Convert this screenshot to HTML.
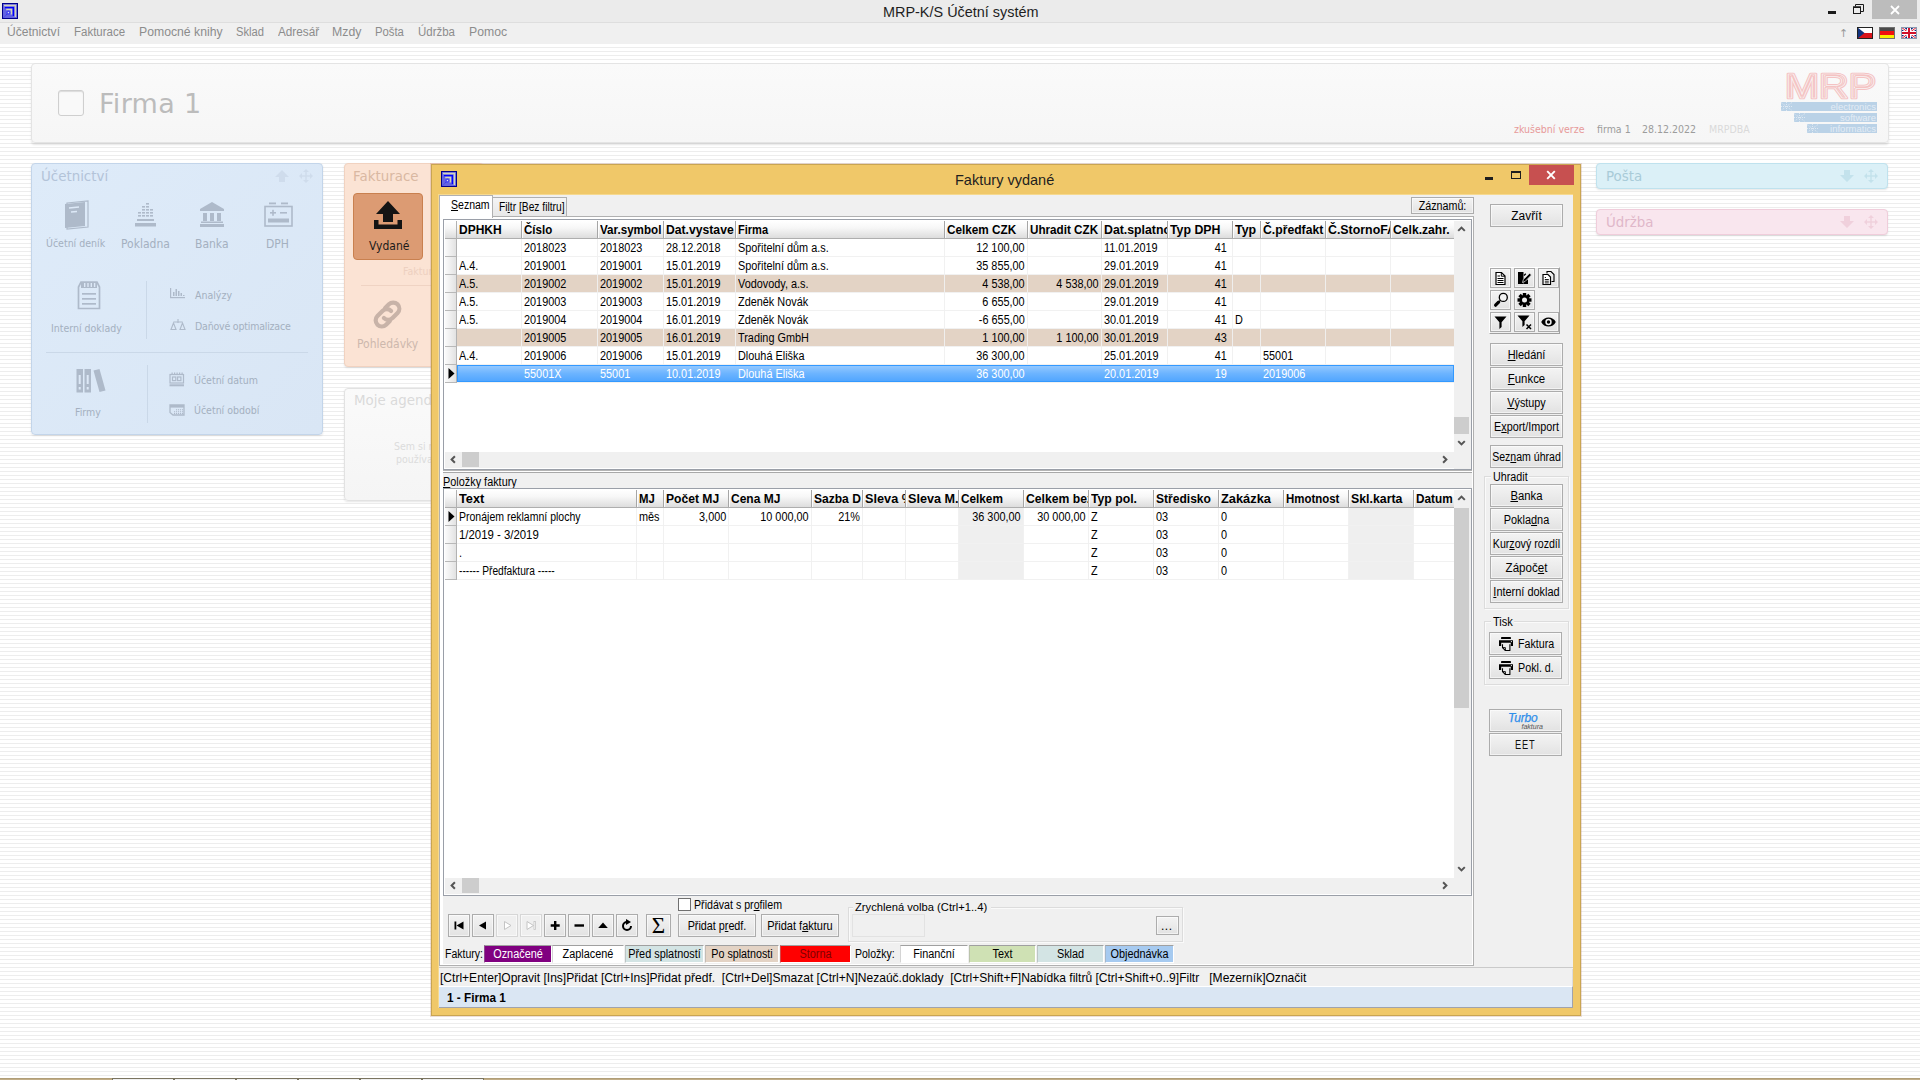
<!DOCTYPE html>
<html lang="cs"><head><meta charset="utf-8"><title>MRP-K/S Účetní systém</title>
<style>
html,body{margin:0;padding:0}
body{width:1920px;height:1080px;overflow:hidden;position:relative;font-family:"Liberation Sans",sans-serif;font-size:11px;color:#000;
background:repeating-linear-gradient(to bottom,#fff 0,#fff 3px,#ededed 3px,#ededed 4px)}
.a{position:absolute}
.t{position:absolute;white-space:pre;line-height:1}
.dj{font-family:"DejaVu Sans",sans-serif}
.djc{font-family:"DejaVu Sans Condensed","DejaVu Sans",sans-serif}
u{text-decoration:underline;text-underline-offset:1px}
/* main chrome */
#tb{left:0;top:0;width:1920px;height:22px;background:#ebebeb}
#mb{left:0;top:22px;width:1920px;height:22px;background:#f0f0f0;border-top:1px solid #dedede;box-sizing:border-box}
.mi{top:26px;font-size:12px;color:#8a8a8a;letter-spacing:-0.05px}
.panel{position:absolute;box-sizing:border-box;border-radius:4px}
/* window */
#win{left:431px;top:163px;width:1150px;height:853px;background:#f0c869;box-sizing:border-box;border:1px solid #dcae4f}
#cli{left:439px;top:195px;width:1135px;height:813px;background:#f0f0f0}
.btn{position:absolute;box-sizing:border-box;border:1px solid #adadad;background:linear-gradient(#f4f4f4,#e6e6e6);text-align:center;white-space:pre;font-size:11px;letter-spacing:-0.2px}
.btn span{position:absolute;left:0;right:0;text-align:center}
.grid{position:absolute;background:#fff;overflow:hidden}
.gh{position:absolute;top:0;height:17px;background:linear-gradient(#ffffff 0%,#f4f4f4 40%,#dcdcdc 100%);border-right:1px solid #b4b4b4;border-bottom:1px solid #b4b4b4;box-sizing:content-box;overflow:hidden;white-space:pre;font-weight:bold;font-size:12px;letter-spacing:-0.1px}
.gh span{position:absolute;left:2px;top:3px;line-height:1}
.gc{position:absolute;height:17px;overflow:hidden;white-space:pre;font-size:11px;letter-spacing:-0.2px;border-right:1px solid #ececec;border-bottom:1px solid #ececec}
.gc span{position:absolute;top:3px;line-height:1}
.gc .l{left:2px}.gc .r{right:3px}
.ind{position:absolute;left:0;width:12px;height:17px;background:linear-gradient(to right,#fdfdfd,#e2e2e2);border-right:1px solid #c0c0c0;border-bottom:1px solid #c0c0c0}
.lg{position:absolute;top:945px;height:17px;box-sizing:border-box;border-top:1px solid #a0a0a0;border-left:1px solid #a0a0a0;border-right:1px solid #fff;border-bottom:1px solid #fff;text-align:center;font-size:11px;letter-spacing:-0.2px;line-height:15px;white-space:pre}

.ms{font-size:12.5px;transform:scaleX(.87);transform-origin:0 0}
.msr{font-size:12.5px;transform:scaleX(.87);transform-origin:100% 0}
.msb{font-size:12.5px;font-weight:bold;transform:scaleX(.96);transform-origin:0 0}
.msc{font-size:12.5px;transform:scaleX(.87);transform-origin:50% 0;text-align:center}
.b{position:absolute;box-sizing:border-box;border:1px solid #acacac;background:linear-gradient(#f3f3f3 0%,#ebebeb 50%,#e2e2e2 100%);box-shadow:inset 0 0 0 1px rgba(255,255,255,.55)}
</style></head>
<body>
<div class="a" id="tb"></div><div class="a" id="mb"></div>
<svg class="a" style="left:2px;top:3px" width="16" height="16" viewBox="0 0 16 16"><rect width="16" height="16" fill="#00008b"/><rect x="1" y="1" width="14" height="14" fill="#6363e2"/><path d="M2 2.6H13.4V14" fill="none" stroke="#d3d3ba" stroke-width="1.5"/><path d="M3 4.6H11.4V13" fill="none" stroke="#0000ff" stroke-width="1.3"/><path d="M4.2 6.6H9.4V11.5" fill="none" stroke="#d3d3ba" stroke-width="1.5"/><circle cx="6.4" cy="9.6" r="1.7" fill="#5a5aee" stroke="#3a3af6" stroke-width=".8"/><rect x="5.9" y="9.1" width="1" height="1" fill="#fff"/><path d="M5 11.2L1.8 14.4" stroke="#2222f0" stroke-width="1" stroke-dasharray="1 1"/></svg>
<div class="t " style="left:883px;top:4px;font-size:15px;color:#1e1e1e;transform:scaleX(.962);transform-origin:0 0">MRP-K/S Účetní systém</div>
<div class="a " style="left:1828px;top:11px;width:8px;height:3px;background:#1a1a1a"></div>
<svg class="a" style="left:1853px;top:4px" width="11" height="10" viewBox="0 0 11 10"><path d="M2.5 2.5V0.5H10.5V7.5H8" fill="none" stroke="#1a1a1a" stroke-width="1"/><rect x="0.5" y="3" width="7" height="6.5" fill="none" stroke="#1a1a1a" stroke-width="1"/><rect x="0" y="2.5" width="8" height="1.5" fill="#1a1a1a"/></svg>
<div class="a " style="left:1872px;top:0px;width:45px;height:19px;background:#bcbcbc"></div>
<svg class="a" style="left:1890px;top:5px" width="10" height="10" viewBox="0 0 10 10"><path d="M1 1L9 9M9 1L1 9" stroke="#fff" stroke-width="1.8" fill="none"/></svg>
<div class="t" style="left:7px;top:26.43px;font-size:12.5px;color:#8c8c8c;transform:scaleX(0.966);transform-origin:0 0;">Účetnictví</div>
<div class="t" style="left:74px;top:26.43px;font-size:12.5px;color:#8c8c8c;transform:scaleX(0.919);transform-origin:0 0;">Fakturace</div>
<div class="t" style="left:139px;top:26.43px;font-size:12.5px;color:#8c8c8c;transform:scaleX(0.978);transform-origin:0 0;">Pomocné knihy</div>
<div class="t" style="left:236px;top:26.43px;font-size:12.5px;color:#8c8c8c;transform:scaleX(0.895);transform-origin:0 0;">Sklad</div>
<div class="t" style="left:278px;top:26.43px;font-size:12.5px;color:#8c8c8c;transform:scaleX(0.939);transform-origin:0 0;">Adresář</div>
<div class="t" style="left:332px;top:26.43px;font-size:12.5px;color:#8c8c8c;transform:scaleX(0.984);transform-origin:0 0;">Mzdy</div>
<div class="t" style="left:375px;top:26.43px;font-size:12.5px;color:#8c8c8c;transform:scaleX(0.904);transform-origin:0 0;">Pošta</div>
<div class="t" style="left:418px;top:26.43px;font-size:12.5px;color:#8c8c8c;transform:scaleX(0.918);transform-origin:0 0;">Údržba</div>
<div class="t" style="left:469px;top:26.43px;font-size:12.5px;color:#8c8c8c;transform:scaleX(0.979);transform-origin:0 0;">Pomoc</div>
<div class="t dj" style="left:1839px;top:28px;font-size:11px;color:#9a9a9a">↑</div>
<svg class="a" style="left:1857px;top:27px" width="16" height="12" viewBox="0 0 16 12"><rect width="16" height="12" fill="#fff"/><rect y="6" width="16" height="6" fill="#d8141c"/><path d="M0 0L7.5 6L0 12Z" fill="#11337e"/><rect x=".5" y=".5" width="15" height="11" fill="none" stroke="#222" stroke-width="1"/></svg>
<svg class="a" style="left:1879px;top:27px" width="16" height="12" viewBox="0 0 16 12"><rect width="16" height="4" fill="#4a4a4a"/><rect y="4" width="16" height="4" fill="#f01010"/><rect y="8" width="16" height="4" fill="#f8f000"/><rect x=".5" y=".5" width="15" height="11" fill="none" stroke="#707070" stroke-width="1"/></svg>
<svg class="a" style="left:1901px;top:27px" width="16" height="12" viewBox="0 0 16 12"><rect width="16" height="12" fill="#0a1f7a"/><path d="M0 0L16 12M16 0L0 12" stroke="#fff" stroke-width="2.6"/><path d="M0 0L16 12M16 0L0 12" stroke="#e0162b" stroke-width="1"/><path d="M8 0V12M0 6H16" stroke="#fff" stroke-width="4"/><path d="M8 0V12M0 6H16" stroke="#d0102a" stroke-width="2"/><rect x=".5" y=".5" width="15" height="11" fill="none" stroke="#8a9ab0" stroke-width="1"/></svg>
<div class="a panel" style="left:31px;top:63px;width:1858px;height:80px;background:linear-gradient(#fafafa,#f6f6f6);border:1px solid #e4e4e4;box-shadow:0 2px 2px rgba(0,0,0,.10)"></div>
<div class="a " style="left:58px;top:90px;width:26px;height:26px;box-sizing:border-box;border:1px solid #cfcfcf;border-radius:3px;background:#f9f9f9;box-shadow:inset 0 1px 1px rgba(0,0,0,.12)"></div>
<div class="t dj" style="left:99px;top:90px;font-size:27px;color:#bcbcbc;letter-spacing:0.3px">Firma 1</div>
<div class="t djc" style="left:1514px;top:124px;font-size:10.5px;color:#e79a9a">zkušební verze</div>
<div class="t djc" style="left:1597px;top:124px;font-size:10.5px;color:#9c9c9c">firma 1</div>
<div class="t djc" style="left:1642px;top:124px;font-size:10.5px;color:#9c9c9c">28.12.2022</div>
<div class="t djc" style="left:1709px;top:124px;font-size:10.5px;color:#dadada">MRPDBA</div>
<svg class="a" style="left:1778px;top:68px" width="104" height="70" viewBox="0 0 104 70">
<text x="7" y="30" font-family="Liberation Sans, sans-serif" font-size="35" textLength="91" lengthAdjust="spacingAndGlyphs" fill="none" stroke="#f4c3c3" stroke-width="2.7" stroke-linejoin="round">MRP</text>
<text x="7" y="30" font-family="Liberation Sans, sans-serif" font-size="35" textLength="91" lengthAdjust="spacingAndGlyphs" fill="none" stroke="#f9f3f3" stroke-width="0.7" stroke-linejoin="round">MRP</text>
<rect x="3" y="34" width="96" height="9" fill="#bad2e7"/><rect x="16" y="45" width="83" height="9" fill="#bad2e7"/><rect x="29" y="56" width="70" height="9" fill="#bad2e7"/>
<g fill="#e3ecf5" font-family="Liberation Sans, sans-serif" font-size="9.5" text-anchor="end"><text x="98" y="41.5">electronics</text><text x="98" y="52.5">software</text><text x="98" y="63.5">informatics</text></g>
<g stroke="#dfe9f3" stroke-width="1" stroke-dasharray="1 1" fill="none"><path d="M3 34.5l11 8M14 34.5l-11 8M3 38.5h11M8.5 34v9"/><path d="M16 45.5l11 8M27 45.5l-11 8M16 49.5h11M21.5 45v9"/><path d="M29 56.5l11 8M40 56.5l-11 8M29 60.5h11M34.5 56v9"/></g>
</svg>
<div class="a panel" style="left:31px;top:163px;width:292px;height:272px;background:linear-gradient(135deg,#deebf9,#d9e6f5);border:1px solid #c3d5ea;box-shadow:0 1px 2px rgba(0,0,0,.10)"></div>
<div class="t dj" style="left:41px;top:170px;font-size:13.4px;color:#b3c3d8">Účetnictví</div>
<svg class="a" style="left:275px;top:169px" width="40" height="14" viewBox="0 0 40 14"><path d="M7 1L14 8H10V13H4V8H0Z" fill="#cfdcec"/><g fill="#cfdcec"><path d="M31 0l3 3h-6zM31 14l3-3h-6zM24 7l3-3v6zM38 7l-3-3v6z"/><rect x="30.3" y="2" width="1.4" height="10"/><rect x="26" y="6.3" width="10" height="1.4"/></g></svg>
<svg class="a" style="left:64px;top:200px" width="28" height="30" viewBox="0 0 28 30"><path d="M3 3L24 1V27L3 29Z" fill="none" stroke="#aebaca" stroke-width="1.2"/><path d="M1 4L21 2V26L1 28Z" fill="#aebaca"/><path d="M5 8L15 7M7 12L13 11.5" stroke="#dde9f7" stroke-width="1.3"/></svg>
<div class="t djc" style="left:46px;top:238px;font-size:10.5px;color:#a4b0c0">Účetní deník</div>
<svg class="a" style="left:135px;top:202px" width="22" height="26" viewBox="0 0 22 26"><g fill="#aebaca"><rect x="0" y="21" width="21" height="3.5"/><rect x="2" y="17" width="17" height="2"/><rect x="3" y="13" width="3" height="1.6"/><rect x="3" y="10" width="3" height="1.6"/><rect x="7" y="13" width="3" height="1.6"/><rect x="7" y="10" width="3" height="1.6"/><rect x="7" y="7" width="3" height="1.6"/><rect x="7" y="4" width="3" height="1.6"/><rect x="11" y="13" width="3" height="1.6"/><rect x="11" y="10" width="3" height="1.6"/><rect x="11" y="7" width="3" height="1.6"/><rect x="11" y="4" width="3" height="1.6"/><rect x="11" y="1" width="3" height="1.6"/><rect x="15" y="13" width="3" height="1.6"/><rect x="15" y="10" width="3" height="1.6"/><rect x="15" y="7" width="3" height="1.6"/></g></svg>
<div class="t djc" style="left:121px;top:238px;font-size:12px;color:#a4b0c0">Pokladna</div>
<svg class="a" style="left:199px;top:202px" width="26" height="26" viewBox="0 0 26 26"><g fill="#aebaca"><path d="M13 0L25 7V9H1V7Z"/><rect x="4" y="11" width="4" height="8"/><rect x="11" y="11" width="4" height="8"/><rect x="18" y="11" width="4" height="8"/><rect x="2" y="19.5" width="22" height="1.5"/><rect x="1" y="22" width="24" height="3"/></g></svg>
<div class="t djc" style="left:195px;top:238px;font-size:12px;color:#a4b0c0">Banka</div>
<svg class="a" style="left:264px;top:202px" width="30" height="26" viewBox="0 0 30 26"><g fill="none" stroke="#aebaca" stroke-width="1.6"><rect x="1" y="4.5" width="27" height="19.5"/></g><g fill="#aebaca"><rect x="5" y="0.5" width="7" height="1.8"/><rect x="17" y="0.5" width="7" height="1.8"/><rect x="6" y="10" width="6" height="1.6"/><rect x="8.2" y="7.8" width="1.6" height="6"/><rect x="16" y="10" width="7" height="1.6"/><rect x="4" y="16.5" width="21" height="4"/></g></svg>
<div class="t djc" style="left:266px;top:238px;font-size:12px;color:#a4b0c0">DPH</div>
<svg class="a" style="left:77px;top:280px" width="24" height="30" viewBox="0 0 24 30"><path d="M4 2H20L22.5 7V28.5H1.5V7Z" fill="none" stroke="#aebaca" stroke-width="1.7"/><g fill="#aebaca"><rect x="4" y="2" width="16" height="6"/><rect x="5" y="13" width="14" height="1.7"/><rect x="5" y="18" width="14" height="1.7"/><rect x="5" y="23" width="14" height="1.7"/></g><g fill="#dde9f7"><rect x="7" y="3" width="1.4" height="4"/><rect x="10.3" y="3" width="1.4" height="4"/><rect x="13.6" y="3" width="1.4" height="4"/><rect x="16.9" y="3" width="1.4" height="4"/></g></svg>
<div class="t djc" style="left:51px;top:323px;font-size:10.5px;color:#a4b0c0">Interní doklady</div>
<div class="a " style="left:146px;top:281px;width:1px;height:58px;background:#cad8e8"></div>
<svg class="a" style="left:170px;top:288px" width="16" height="12" viewBox="0 0 16 12"><g fill="#aebaca"><rect x="0" y="0" width="1.2" height="10"/><rect x="0" y="9" width="15" height="1.2"/><rect x="3" y="4" width="1.5" height="4"/><rect x="5.5" y="1" width="1.5" height="7"/><rect x="8" y="3" width="1.5" height="5"/><rect x="10.5" y="5" width="1.5" height="3"/><rect x="13" y="7" width="1.5" height="1"/></g></svg>
<div class="t djc" style="left:195px;top:290px;font-size:10.5px;color:#a4b0c0">Analýzy</div>
<svg class="a" style="left:170px;top:318px" width="16" height="13" viewBox="0 0 16 13"><g fill="none" stroke="#aebaca" stroke-width="1.1"><path d="M3.5 5L1 11.5H6ZM12.5 5L10 11.5H15Z"/><path d="M3.5 4H12.5M8 1V5"/></g></svg>
<div class="t djc" style="left:195px;top:321px;font-size:10.5px;color:#a4b0c0;letter-spacing:-0.2px">Daňové optimalizace</div>
<div class="a " style="left:46px;top:352px;width:262px;height:1px;background:#cad8e8"></div>
<svg class="a" style="left:76px;top:368px" width="30" height="26" viewBox="0 0 30 26"><g fill="#aebaca"><rect x="0.5" y="1" width="6.5" height="23.5"/><rect x="8.5" y="1" width="6.5" height="23.5"/><path d="M17.5 2.5L23.5 1L29.5 22.5L23.5 24Z"/></g><g fill="#dde9f7"><rect x="2.7" y="7" width="2" height="9"/><rect x="10.7" y="7" width="2" height="9"/><rect x="2.7" y="19" width="2" height="2.5"/><rect x="10.7" y="19" width="2" height="2.5"/></g></svg>
<div class="t djc" style="left:75px;top:407px;font-size:10.5px;color:#a4b0c0">Firmy</div>
<div class="a " style="left:147px;top:365px;width:1px;height:58px;background:#cad8e8"></div>
<svg class="a" style="left:169px;top:372px" width="16" height="15" viewBox="0 0 16 15"><g fill="none" stroke="#aebaca" stroke-width="1.2"><rect x="1" y="2.5" width="13.5" height="8.5"/><rect x="3.5" y="5" width="3.3" height="3.6"/><rect x="8.6" y="5" width="3.3" height="3.6"/></g><g fill="#aebaca"><rect x="0.5" y="12.3" width="14.5" height="2"/><rect x="2.5" y="0.5" width="1.2" height="2"/><rect x="5" y="0.5" width="1.2" height="2"/><rect x="7.5" y="0.5" width="1.2" height="2"/><rect x="10" y="0.5" width="1.2" height="2"/><rect x="12.5" y="0.5" width="1.2" height="2"/></g></svg>
<div class="t djc" style="left:194px;top:375px;font-size:10.5px;color:#a4b0c0">Účetní datum</div>
<svg class="a" style="left:169px;top:404px" width="16" height="13" viewBox="0 0 16 13"><path d="M1 1H15V11H4L1 8.5Z" fill="none" stroke="#aebaca" stroke-width="1.3"/><rect x="1" y="1" width="14" height="2.6" fill="#aebaca"/><g fill="#aebaca"><rect x="7" y="5.2" width="1.1" height="1.1"/><rect x="9" y="5.2" width="1.1" height="1.1"/><rect x="11" y="5.2" width="1.1" height="1.1"/><rect x="13" y="5.2" width="1.1" height="1.1"/><rect x="5" y="7.2" width="1.1" height="1.1"/><rect x="7" y="7.2" width="1.1" height="1.1"/><rect x="9" y="7.2" width="1.1" height="1.1"/><rect x="11" y="7.2" width="1.1" height="1.1"/><rect x="13" y="7.2" width="1.1" height="1.1"/><rect x="5" y="9" width="1.1" height="1.1"/><rect x="7" y="9" width="1.1" height="1.1"/><rect x="9" y="9" width="1.1" height="1.1"/><rect x="11" y="9" width="1.1" height="1.1"/><rect x="13" y="9" width="1.1" height="1.1"/></g></svg>
<div class="t djc" style="left:194px;top:405px;font-size:10.5px;color:#a4b0c0">Účetní období</div>
<div class="a panel" style="left:344px;top:163px;width:140px;height:204px;background:#fbe3d4;border:1px solid #f1d2c0;box-shadow:0 1px 2px rgba(0,0,0,.10)"></div>
<div class="t dj" style="left:353px;top:170px;font-size:13.4px;color:#d9b8a2">Fakturace</div>
<div class="a " style="left:353px;top:193px;width:70px;height:67px;box-sizing:border-box;background:#dc9b73;border:1px solid #c9804f;border-radius:4px"></div>
<svg class="a" style="left:373px;top:200px" width="30" height="30" viewBox="0 0 30 30"><g fill="#141414"><path d="M15 1L27 14H20V22H10V14H3Z"/><path d="M1 20H5.5V24.5H24.5V20H29V29H1Z"/></g></svg>
<div class="t djc" style="left:369px;top:240px;font-size:12px;color:#1a1a1a">Vydané</div>
<div class="t djc" style="left:403px;top:266px;font-size:10.5px;color:#edd0c0">Faktury</div>
<div class="a " style="left:361px;top:285px;width:100px;height:1px;background:#efd3c3"></div>
<svg class="a" style="left:370px;top:297px" width="35" height="35" viewBox="0 0 30 30"><g fill="none" stroke="#c8b3a8" stroke-width="3.6" stroke-linecap="round"><path d="M13 9.5l3.2-3.2a5.2 5.2 0 0 1 7.4 7.4l-4.3 4.3a5.2 5.2 0 0 1-7.4 0"/><path d="M17 20.5l-3.2 3.2a5.2 5.2 0 0 1-7.4-7.4l4.3-4.3a5.2 5.2 0 0 1 7.4 0"/></g></svg>
<div class="t djc" style="left:357px;top:338px;font-size:12px;color:#cdb8ad">Pohledávky</div>
<div class="a panel" style="left:344px;top:388px;width:140px;height:113px;background:linear-gradient(#fafafa,#f5f5f5);border:1px solid #e2e2e2;box-shadow:0 1px 2px rgba(0,0,0,.10)"></div>
<div class="t dj" style="left:354px;top:394px;font-size:13.4px;color:#dadada">Moje agendy</div>
<div class="t djc" style="left:394px;top:441px;font-size:10.5px;color:#dcdcdc">Sem si m</div>
<div class="t djc" style="left:396px;top:454px;font-size:10.5px;color:#dcdcdc">používa</div>
<div class="a panel" style="left:1596px;top:163px;width:292px;height:26px;background:#dbf0f7;border:1px solid #bfe2ee;box-shadow:0 1px 2px rgba(0,0,0,.10)"></div>
<div class="t dj" style="left:1606px;top:170.4px;font-size:13.4px;color:#a9cbd8">Pošta</div>
<svg class="a" style="left:1840px;top:169px" width="40" height="14" viewBox="0 0 40 14"><path d="M7 13L14 6H10V1H4V6H0Z" fill="#c3e2ec"/><g fill="#c3e2ec"><path d="M31 0l3 3h-6zM31 14l3-3h-6zM24 7l3-3v6zM38 7l-3-3v6z"/><rect x="30.3" y="2" width="1.4" height="10"/><rect x="26" y="6.3" width="10" height="1.4"/></g></svg>
<div class="a panel" style="left:1596px;top:209px;width:292px;height:26px;background:#f9e6ee;border:1px solid #f0cddb;box-shadow:0 1px 2px rgba(0,0,0,.10)"></div>
<div class="t dj" style="left:1606px;top:216.4px;font-size:13.4px;color:#e0b7c9">Údržba</div>
<svg class="a" style="left:1840px;top:215px" width="40" height="14" viewBox="0 0 40 14"><path d="M7 13L14 6H10V1H4V6H0Z" fill="#f0d0dc"/><g fill="#f0d0dc"><path d="M31 0l3 3h-6zM31 14l3-3h-6zM24 7l3-3v6zM38 7l-3-3v6z"/><rect x="30.3" y="2" width="1.4" height="10"/><rect x="26" y="6.3" width="10" height="1.4"/></g></svg>
<div class="a " style="left:431px;top:164px;width:1150px;height:852px;background:#f0c869;box-sizing:border-box;border:1px solid #c9a552;box-shadow:0 0 0 1px rgba(190,140,120,.28)"></div>
<div class="a " style="left:438px;top:194px;width:1135px;height:814px;background:#f6d98f"></div>
<div class="a " style="left:439px;top:195px;width:1134px;height:813px;background:#f0f0f0"></div>
<svg class="a" style="left:441px;top:171px" width="16" height="16" viewBox="0 0 16 16"><rect width="16" height="16" fill="#00008b"/><rect x="1" y="1" width="14" height="14" fill="#6363e2"/><path d="M2 2.6H13.4V14" fill="none" stroke="#d3d3ba" stroke-width="1.5"/><path d="M3 4.6H11.4V13" fill="none" stroke="#0000ff" stroke-width="1.3"/><path d="M4.2 6.6H9.4V11.5" fill="none" stroke="#d3d3ba" stroke-width="1.5"/><circle cx="6.4" cy="9.6" r="1.7" fill="#5a5aee" stroke="#3a3af6" stroke-width=".8"/><rect x="5.9" y="9.1" width="1" height="1" fill="#fff"/><path d="M5 11.2L1.8 14.4" stroke="#2222f0" stroke-width="1" stroke-dasharray="1 1"/></svg>
<div class="t " style="left:955px;top:172px;font-size:15px;color:#1e1e1e;transform:scaleX(.968);transform-origin:0 0">Faktury vydané</div>
<div class="a " style="left:1485px;top:177px;width:8px;height:3px;background:#1e1e1e"></div>
<div class="a " style="left:1511px;top:171px;width:10px;height:8px;box-sizing:border-box;border:1px solid #1e1e1e;border-top-width:2px"></div>
<div class="a " style="left:1529px;top:165px;width:45px;height:20px;background:#c75050"></div>
<svg class="a" style="left:1546px;top:170px" width="10" height="10" viewBox="0 0 10 10"><path d="M1.2 1.2L8.8 8.8M8.8 1.2L1.2 8.8" stroke="#fff" stroke-width="1.9" fill="none"/></svg>
<div class="a " style="left:439px;top:216px;width:1035px;height:750px;box-sizing:border-box;border:1px solid #b0b0b0;background:#fff"></div>
<div class="a " style="left:439px;top:195px;width:54px;height:23px;box-sizing:border-box;border:1px solid #b0b0b0;border-bottom:none;background:#fff"></div>
<div class="t ms" style="left:451px;top:199.43px;color:#000;transform:scaleX(0.842);"><u>S</u>eznam</div>
<div class="a " style="left:492px;top:197px;width:75px;height:19px;box-sizing:border-box;border:1px solid #b0b0b0;border-bottom:none;background:linear-gradient(#f4f4f4,#e8e8e8)"></div>
<div class="t ms" style="left:499px;top:201.43px;color:#000;transform:scaleX(0.821);">Fi<u>l</u>tr [Bez filtru]</div>
<div class="b" style="left:1411px;top:197px;width:63px;height:17px"></div>
<div class="t msc" style="left:1371px;width:143px;top:200.43px;color:#000;transform:scaleX(0.858)">Záznamů:</div>
<div class="a " style="left:443px;top:219px;width:1029px;height:251px;box-sizing:border-box;border:1px solid #9a9fa8;background:#fff"></div>
<div class="a " style="left:445px;top:221px;width:1009px;height:18px;background:linear-gradient(#ffffff 0%,#f7f7f7 40%,#dddddd 100%);border-bottom:1px solid #aeaeae;box-sizing:border-box"></div>
<div class="a " style="left:445px;top:239px;width:11px;height:144px;background:linear-gradient(to right,#fbfbfb,#e2e2e2)"></div>
<div class="a " style="left:456px;top:221px;width:1px;height:162px;background:#b2b2b2"></div>
<div class="a " style="left:457px;top:275px;width:997px;height:17px;background:#e3d3c5"></div>
<div class="a " style="left:457px;top:329px;width:997px;height:17px;background:#e3d3c5"></div>
<div class="a " style="left:445px;top:256px;width:11px;height:1px;background:#b8b8b8"></div>
<div class="a " style="left:457px;top:256px;width:997px;height:1px;background:rgba(240,240,240,.92)"></div>
<div class="a " style="left:445px;top:274px;width:11px;height:1px;background:#b8b8b8"></div>
<div class="a " style="left:457px;top:274px;width:997px;height:1px;background:rgba(240,240,240,.92)"></div>
<div class="a " style="left:445px;top:292px;width:11px;height:1px;background:#b8b8b8"></div>
<div class="a " style="left:457px;top:292px;width:997px;height:1px;background:rgba(240,240,240,.92)"></div>
<div class="a " style="left:445px;top:310px;width:11px;height:1px;background:#b8b8b8"></div>
<div class="a " style="left:457px;top:310px;width:997px;height:1px;background:rgba(240,240,240,.92)"></div>
<div class="a " style="left:445px;top:328px;width:11px;height:1px;background:#b8b8b8"></div>
<div class="a " style="left:457px;top:328px;width:997px;height:1px;background:rgba(240,240,240,.92)"></div>
<div class="a " style="left:445px;top:346px;width:11px;height:1px;background:#b8b8b8"></div>
<div class="a " style="left:457px;top:346px;width:997px;height:1px;background:rgba(240,240,240,.92)"></div>
<div class="a " style="left:445px;top:364px;width:11px;height:1px;background:#b8b8b8"></div>
<div class="a " style="left:457px;top:364px;width:997px;height:1px;background:rgba(240,240,240,.92)"></div>
<div class="a " style="left:445px;top:382px;width:11px;height:1px;background:#b8b8b8"></div>
<div class="a " style="left:457px;top:382px;width:997px;height:1px;background:rgba(240,240,240,.92)"></div>
<div class="a " style="left:521px;top:221px;width:1px;height:17px;background:#a6a6a6"></div>
<div class="a " style="left:522px;top:221px;width:1px;height:17px;background:rgba(255,255,255,.85)"></div>
<div class="a " style="left:521px;top:239px;width:1px;height:144px;background:rgba(240,240,240,.92)"></div>
<div class="a " style="left:597px;top:221px;width:1px;height:17px;background:#a6a6a6"></div>
<div class="a " style="left:598px;top:221px;width:1px;height:17px;background:rgba(255,255,255,.85)"></div>
<div class="a " style="left:597px;top:239px;width:1px;height:144px;background:rgba(240,240,240,.92)"></div>
<div class="a " style="left:663px;top:221px;width:1px;height:17px;background:#a6a6a6"></div>
<div class="a " style="left:664px;top:221px;width:1px;height:17px;background:rgba(255,255,255,.85)"></div>
<div class="a " style="left:663px;top:239px;width:1px;height:144px;background:rgba(240,240,240,.92)"></div>
<div class="a " style="left:735px;top:221px;width:1px;height:17px;background:#a6a6a6"></div>
<div class="a " style="left:736px;top:221px;width:1px;height:17px;background:rgba(255,255,255,.85)"></div>
<div class="a " style="left:735px;top:239px;width:1px;height:144px;background:rgba(240,240,240,.92)"></div>
<div class="a " style="left:944px;top:221px;width:1px;height:17px;background:#a6a6a6"></div>
<div class="a " style="left:945px;top:221px;width:1px;height:17px;background:rgba(255,255,255,.85)"></div>
<div class="a " style="left:944px;top:239px;width:1px;height:144px;background:rgba(240,240,240,.92)"></div>
<div class="a " style="left:1027px;top:221px;width:1px;height:17px;background:#a6a6a6"></div>
<div class="a " style="left:1028px;top:221px;width:1px;height:17px;background:rgba(255,255,255,.85)"></div>
<div class="a " style="left:1027px;top:239px;width:1px;height:144px;background:rgba(240,240,240,.92)"></div>
<div class="a " style="left:1101px;top:221px;width:1px;height:17px;background:#a6a6a6"></div>
<div class="a " style="left:1102px;top:221px;width:1px;height:17px;background:rgba(255,255,255,.85)"></div>
<div class="a " style="left:1101px;top:239px;width:1px;height:144px;background:rgba(240,240,240,.92)"></div>
<div class="a " style="left:1167px;top:221px;width:1px;height:17px;background:#a6a6a6"></div>
<div class="a " style="left:1168px;top:221px;width:1px;height:17px;background:rgba(255,255,255,.85)"></div>
<div class="a " style="left:1167px;top:239px;width:1px;height:144px;background:rgba(240,240,240,.92)"></div>
<div class="a " style="left:1232px;top:221px;width:1px;height:17px;background:#a6a6a6"></div>
<div class="a " style="left:1233px;top:221px;width:1px;height:17px;background:rgba(255,255,255,.85)"></div>
<div class="a " style="left:1232px;top:239px;width:1px;height:144px;background:rgba(240,240,240,.92)"></div>
<div class="a " style="left:1260px;top:221px;width:1px;height:17px;background:#a6a6a6"></div>
<div class="a " style="left:1261px;top:221px;width:1px;height:17px;background:rgba(255,255,255,.85)"></div>
<div class="a " style="left:1260px;top:239px;width:1px;height:144px;background:rgba(240,240,240,.92)"></div>
<div class="a " style="left:1325px;top:221px;width:1px;height:17px;background:#a6a6a6"></div>
<div class="a " style="left:1326px;top:221px;width:1px;height:17px;background:rgba(255,255,255,.85)"></div>
<div class="a " style="left:1325px;top:239px;width:1px;height:144px;background:rgba(240,240,240,.92)"></div>
<div class="a " style="left:1390px;top:221px;width:1px;height:17px;background:#a6a6a6"></div>
<div class="a " style="left:1391px;top:221px;width:1px;height:17px;background:rgba(255,255,255,.85)"></div>
<div class="a " style="left:1390px;top:239px;width:1px;height:144px;background:rgba(240,240,240,.92)"></div>
<div class="a " style="left:457px;top:365px;width:997px;height:17px;box-sizing:border-box;border:1px solid #3399ff;background:linear-gradient(#93c8ff 0%,#6cb4ff 50%,#52a6ff 100%)"></div>
<div class="a" style="left:459px;top:221px;width:62px;height:16px;overflow:hidden"><div class="t msb" style="left:0;top:3.43px;color:#000;transform:scaleX(0.961);">DPHKH</div></div>
<div class="a" style="left:524px;top:221px;width:73px;height:16px;overflow:hidden"><div class="t msb" style="left:0;top:3.43px;color:#000;transform:scaleX(0.923);">Číslo</div></div>
<div class="a" style="left:600px;top:221px;width:63px;height:16px;overflow:hidden"><div class="t msb" style="left:0;top:3.43px;color:#000;transform:scaleX(0.93);">Var.symbol</div></div>
<div class="a" style="left:666px;top:221px;width:69px;height:16px;overflow:hidden"><div class="t msb" style="left:0;top:3.43px;color:#000;transform:scaleX(0.974);">Dat.vystave</div></div>
<div class="a" style="left:738px;top:221px;width:206px;height:16px;overflow:hidden"><div class="t msb" style="left:0;top:3.43px;color:#000;transform:scaleX(0.884);">Firma</div></div>
<div class="a" style="left:947px;top:221px;width:80px;height:16px;overflow:hidden"><div class="t msb" style="left:0;top:3.43px;color:#000;transform:scaleX(0.94);">Celkem CZK</div></div>
<div class="a" style="left:1030px;top:221px;width:71px;height:16px;overflow:hidden"><div class="t msb" style="left:0;top:3.43px;color:#000;transform:scaleX(0.934);">Uhradit CZK</div></div>
<div class="a" style="left:1104px;top:221px;width:63px;height:16px;overflow:hidden"><div class="t msb" style="left:0;top:3.43px;color:#000;transform:scaleX(0.984);">Dat.splatno</div></div>
<div class="a" style="left:1170px;top:221px;width:62px;height:16px;overflow:hidden"><div class="t msb" style="left:0;top:3.43px;color:#000;transform:scaleX(0.987);">Typ DPH</div></div>
<div class="a" style="left:1235px;top:221px;width:25px;height:16px;overflow:hidden"><div class="t msb" style="left:0;top:3.43px;color:#000;transform:scaleX(0.991);">Typ</div></div>
<div class="a" style="left:1263px;top:221px;width:62px;height:16px;overflow:hidden"><div class="t msb" style="left:0;top:3.43px;color:#000;transform:scaleX(0.975);">Č.předfakt</div></div>
<div class="a" style="left:1328px;top:221px;width:62px;height:16px;overflow:hidden"><div class="t msb" style="left:0;top:3.43px;color:#000;transform:scaleX(0.989);">Č.StornoFA</div></div>
<div class="a" style="left:1393px;top:221px;width:61px;height:16px;overflow:hidden"><div class="t msb" style="left:0;top:3.43px;color:#000;transform:scaleX(0.972);">Celk.zahr.</div></div>
<div class="t ms" style="left:524px;top:242.43px;color:#000;">2018023</div>
<div class="t ms" style="left:600px;top:242.43px;color:#000;">2018023</div>
<div class="t ms" style="left:666px;top:242.43px;color:#000;">28.12.2018</div>
<div class="t ms" style="left:738px;top:242.43px;color:#000;">Spořitelní dům a.s.</div>
<div class="t msr" style="right:895px;top:242.43px;color:#000">12 100,00</div>
<div class="t ms" style="left:1104px;top:242.43px;color:#000;">11.01.2019</div>
<div class="t msr" style="right:693px;top:242.43px;color:#000">41</div>
<div class="t ms" style="left:459px;top:260.43px;color:#000;">A.4.</div>
<div class="t ms" style="left:524px;top:260.43px;color:#000;">2019001</div>
<div class="t ms" style="left:600px;top:260.43px;color:#000;">2019001</div>
<div class="t ms" style="left:666px;top:260.43px;color:#000;">15.01.2019</div>
<div class="t ms" style="left:738px;top:260.43px;color:#000;">Spořitelní dům a.s.</div>
<div class="t msr" style="right:895px;top:260.43px;color:#000">35 855,00</div>
<div class="t ms" style="left:1104px;top:260.43px;color:#000;">29.01.2019</div>
<div class="t msr" style="right:693px;top:260.43px;color:#000">41</div>
<div class="t ms" style="left:459px;top:278.43px;color:#000;">A.5.</div>
<div class="t ms" style="left:524px;top:278.43px;color:#000;">2019002</div>
<div class="t ms" style="left:600px;top:278.43px;color:#000;">2019002</div>
<div class="t ms" style="left:666px;top:278.43px;color:#000;">15.01.2019</div>
<div class="t ms" style="left:738px;top:278.43px;color:#000;">Vodovody, a.s.</div>
<div class="t msr" style="right:895px;top:278.43px;color:#000">4 538,00</div>
<div class="t msr" style="right:821px;top:278.43px;color:#000">4 538,00</div>
<div class="t ms" style="left:1104px;top:278.43px;color:#000;">29.01.2019</div>
<div class="t msr" style="right:693px;top:278.43px;color:#000">41</div>
<div class="t ms" style="left:459px;top:296.43px;color:#000;">A.5.</div>
<div class="t ms" style="left:524px;top:296.43px;color:#000;">2019003</div>
<div class="t ms" style="left:600px;top:296.43px;color:#000;">2019003</div>
<div class="t ms" style="left:666px;top:296.43px;color:#000;">15.01.2019</div>
<div class="t ms" style="left:738px;top:296.43px;color:#000;">Zdeněk Novák</div>
<div class="t msr" style="right:895px;top:296.43px;color:#000">6 655,00</div>
<div class="t ms" style="left:1104px;top:296.43px;color:#000;">29.01.2019</div>
<div class="t msr" style="right:693px;top:296.43px;color:#000">41</div>
<div class="t ms" style="left:459px;top:314.43px;color:#000;">A.5.</div>
<div class="t ms" style="left:524px;top:314.43px;color:#000;">2019004</div>
<div class="t ms" style="left:600px;top:314.43px;color:#000;">2019004</div>
<div class="t ms" style="left:666px;top:314.43px;color:#000;">16.01.2019</div>
<div class="t ms" style="left:738px;top:314.43px;color:#000;">Zdeněk Novák</div>
<div class="t msr" style="right:895px;top:314.43px;color:#000">-6 655,00</div>
<div class="t ms" style="left:1104px;top:314.43px;color:#000;">30.01.2019</div>
<div class="t msr" style="right:693px;top:314.43px;color:#000">41</div>
<div class="t ms" style="left:1235px;top:314.43px;color:#000;">D</div>
<div class="t ms" style="left:524px;top:332.43px;color:#000;">2019005</div>
<div class="t ms" style="left:600px;top:332.43px;color:#000;">2019005</div>
<div class="t ms" style="left:666px;top:332.43px;color:#000;">16.01.2019</div>
<div class="t ms" style="left:738px;top:332.43px;color:#000;">Trading GmbH</div>
<div class="t msr" style="right:895px;top:332.43px;color:#000">1 100,00</div>
<div class="t msr" style="right:821px;top:332.43px;color:#000">1 100,00</div>
<div class="t ms" style="left:1104px;top:332.43px;color:#000;">30.01.2019</div>
<div class="t msr" style="right:693px;top:332.43px;color:#000">43</div>
<div class="t ms" style="left:459px;top:350.43px;color:#000;">A.4.</div>
<div class="t ms" style="left:524px;top:350.43px;color:#000;">2019006</div>
<div class="t ms" style="left:600px;top:350.43px;color:#000;">2019006</div>
<div class="t ms" style="left:666px;top:350.43px;color:#000;">15.01.2019</div>
<div class="t ms" style="left:738px;top:350.43px;color:#000;">Dlouhá Eliška</div>
<div class="t msr" style="right:895px;top:350.43px;color:#000">36 300,00</div>
<div class="t ms" style="left:1104px;top:350.43px;color:#000;">25.01.2019</div>
<div class="t msr" style="right:693px;top:350.43px;color:#000">41</div>
<div class="t ms" style="left:1263px;top:350.43px;color:#000;">55001</div>
<div class="t ms" style="left:524px;top:368.43px;color:#fff;">55001X</div>
<div class="t ms" style="left:600px;top:368.43px;color:#fff;">55001</div>
<div class="t ms" style="left:666px;top:368.43px;color:#fff;">10.01.2019</div>
<div class="t ms" style="left:738px;top:368.43px;color:#fff;">Dlouhá Eliška</div>
<div class="t msr" style="right:895px;top:368.43px;color:#fff">36 300,00</div>
<div class="t ms" style="left:1104px;top:368.43px;color:#fff;">20.01.2019</div>
<div class="t msr" style="right:693px;top:368.43px;color:#fff">19</div>
<div class="t ms" style="left:1263px;top:368.43px;color:#fff;">2019006</div>
<svg class="a" style="left:448px;top:368px" width="7" height="11" viewBox="0 0 7 11"><path d="M0.5 0L6.5 5.5L0.5 11Z" fill="#000"/></svg>
<div class="a " style="left:1454px;top:221px;width:17px;height:231px;background:#f0f0f0"></div>
<div class="a " style="left:1454px;top:417px;width:15px;height:17px;background:#cdcdcd"></div>
<svg class="a" style="left:1457px;top:226px" width="9" height="6" viewBox="0 0 9 6"><path d="M1.2 4.9L4.5 1.6L7.8 4.9" fill="none" stroke="#555" stroke-width="2"/></svg>
<svg class="a" style="left:1457px;top:440px" width="9" height="6" viewBox="0 0 9 6"><path d="M1.2 1.1L4.5 4.4L7.8 1.1" fill="none" stroke="#555" stroke-width="2"/></svg>
<div class="a " style="left:445px;top:452px;width:1009px;height:16px;background:#f0f0f0"></div>
<div class="a " style="left:462px;top:452px;width:17px;height:15px;background:#cdcdcd"></div>
<svg class="a" style="left:450px;top:455px" width="6" height="9" viewBox="0 0 6 9"><path d="M4.9 1.2L1.6 4.5L4.9 7.8" fill="none" stroke="#555" stroke-width="2"/></svg>
<svg class="a" style="left:1442px;top:455px" width="6" height="9" viewBox="0 0 6 9"><path d="M1.1 1.2L4.4 4.5L1.1 7.8" fill="none" stroke="#555" stroke-width="2"/></svg>
<div class="a " style="left:1454px;top:452px;width:17px;height:17px;background:#f0f0f0"></div>
<div class="a " style="left:443px;top:470px;width:1029px;height:1px;background:#b4b4b4"></div>
<div class="a " style="left:443px;top:472px;width:1029px;height:1px;background:#a8a8a8"></div>
<div class="a " style="left:443px;top:473px;width:1029px;height:491px;background:#f0f0f0"></div>
<div class="t ms" style="left:443px;top:476.43px;color:#000;"><u>P</u>oložky faktury</div>
<div class="a " style="left:443px;top:488px;width:1029px;height:408px;box-sizing:border-box;border:1px solid #9a9fa8;background:#fff"></div>
<div class="a " style="left:445px;top:490px;width:1009px;height:18px;background:linear-gradient(#ffffff 0%,#f7f7f7 40%,#dddddd 100%);border-bottom:1px solid #aeaeae;box-sizing:border-box"></div>
<div class="a " style="left:445px;top:508px;width:11px;height:72px;background:linear-gradient(to right,#fbfbfb,#e2e2e2)"></div>
<div class="a " style="left:456px;top:490px;width:1px;height:90px;background:#b2b2b2"></div>
<div class="a " style="left:959px;top:508px;width:64px;height:17px;background:#efefef"></div>
<div class="a " style="left:1349px;top:508px;width:64px;height:17px;background:#efefef"></div>
<div class="a " style="left:959px;top:526px;width:64px;height:17px;background:#efefef"></div>
<div class="a " style="left:1349px;top:526px;width:64px;height:17px;background:#efefef"></div>
<div class="a " style="left:959px;top:544px;width:64px;height:17px;background:#efefef"></div>
<div class="a " style="left:1349px;top:544px;width:64px;height:17px;background:#efefef"></div>
<div class="a " style="left:959px;top:562px;width:64px;height:17px;background:#efefef"></div>
<div class="a " style="left:1349px;top:562px;width:64px;height:17px;background:#efefef"></div>
<div class="a " style="left:445px;top:525px;width:11px;height:1px;background:#b8b8b8"></div>
<div class="a " style="left:457px;top:525px;width:997px;height:1px;background:rgba(240,240,240,.92)"></div>
<div class="a " style="left:445px;top:543px;width:11px;height:1px;background:#b8b8b8"></div>
<div class="a " style="left:457px;top:543px;width:997px;height:1px;background:rgba(240,240,240,.92)"></div>
<div class="a " style="left:445px;top:561px;width:11px;height:1px;background:#b8b8b8"></div>
<div class="a " style="left:457px;top:561px;width:997px;height:1px;background:rgba(240,240,240,.92)"></div>
<div class="a " style="left:445px;top:579px;width:11px;height:1px;background:#b8b8b8"></div>
<div class="a " style="left:457px;top:579px;width:997px;height:1px;background:rgba(240,240,240,.92)"></div>
<div class="a " style="left:636px;top:490px;width:1px;height:17px;background:#a6a6a6"></div>
<div class="a " style="left:637px;top:490px;width:1px;height:17px;background:rgba(255,255,255,.85)"></div>
<div class="a " style="left:636px;top:508px;width:1px;height:72px;background:rgba(240,240,240,.92)"></div>
<div class="a " style="left:663px;top:490px;width:1px;height:17px;background:#a6a6a6"></div>
<div class="a " style="left:664px;top:490px;width:1px;height:17px;background:rgba(255,255,255,.85)"></div>
<div class="a " style="left:663px;top:508px;width:1px;height:72px;background:rgba(240,240,240,.92)"></div>
<div class="a " style="left:728px;top:490px;width:1px;height:17px;background:#a6a6a6"></div>
<div class="a " style="left:729px;top:490px;width:1px;height:17px;background:rgba(255,255,255,.85)"></div>
<div class="a " style="left:728px;top:508px;width:1px;height:72px;background:rgba(240,240,240,.92)"></div>
<div class="a " style="left:811px;top:490px;width:1px;height:17px;background:#a6a6a6"></div>
<div class="a " style="left:812px;top:490px;width:1px;height:17px;background:rgba(255,255,255,.85)"></div>
<div class="a " style="left:811px;top:508px;width:1px;height:72px;background:rgba(240,240,240,.92)"></div>
<div class="a " style="left:862px;top:490px;width:1px;height:17px;background:#a6a6a6"></div>
<div class="a " style="left:863px;top:490px;width:1px;height:17px;background:rgba(255,255,255,.85)"></div>
<div class="a " style="left:862px;top:508px;width:1px;height:72px;background:rgba(240,240,240,.92)"></div>
<div class="a " style="left:905px;top:490px;width:1px;height:17px;background:#a6a6a6"></div>
<div class="a " style="left:906px;top:490px;width:1px;height:17px;background:rgba(255,255,255,.85)"></div>
<div class="a " style="left:905px;top:508px;width:1px;height:72px;background:rgba(240,240,240,.92)"></div>
<div class="a " style="left:958px;top:490px;width:1px;height:17px;background:#a6a6a6"></div>
<div class="a " style="left:959px;top:490px;width:1px;height:17px;background:rgba(255,255,255,.85)"></div>
<div class="a " style="left:958px;top:508px;width:1px;height:72px;background:rgba(240,240,240,.92)"></div>
<div class="a " style="left:1023px;top:490px;width:1px;height:17px;background:#a6a6a6"></div>
<div class="a " style="left:1024px;top:490px;width:1px;height:17px;background:rgba(255,255,255,.85)"></div>
<div class="a " style="left:1023px;top:508px;width:1px;height:72px;background:rgba(240,240,240,.92)"></div>
<div class="a " style="left:1088px;top:490px;width:1px;height:17px;background:#a6a6a6"></div>
<div class="a " style="left:1089px;top:490px;width:1px;height:17px;background:rgba(255,255,255,.85)"></div>
<div class="a " style="left:1088px;top:508px;width:1px;height:72px;background:rgba(240,240,240,.92)"></div>
<div class="a " style="left:1153px;top:490px;width:1px;height:17px;background:#a6a6a6"></div>
<div class="a " style="left:1154px;top:490px;width:1px;height:17px;background:rgba(255,255,255,.85)"></div>
<div class="a " style="left:1153px;top:508px;width:1px;height:72px;background:rgba(240,240,240,.92)"></div>
<div class="a " style="left:1218px;top:490px;width:1px;height:17px;background:#a6a6a6"></div>
<div class="a " style="left:1219px;top:490px;width:1px;height:17px;background:rgba(255,255,255,.85)"></div>
<div class="a " style="left:1218px;top:508px;width:1px;height:72px;background:rgba(240,240,240,.92)"></div>
<div class="a " style="left:1283px;top:490px;width:1px;height:17px;background:#a6a6a6"></div>
<div class="a " style="left:1284px;top:490px;width:1px;height:17px;background:rgba(255,255,255,.85)"></div>
<div class="a " style="left:1283px;top:508px;width:1px;height:72px;background:rgba(240,240,240,.92)"></div>
<div class="a " style="left:1348px;top:490px;width:1px;height:17px;background:#a6a6a6"></div>
<div class="a " style="left:1349px;top:490px;width:1px;height:17px;background:rgba(255,255,255,.85)"></div>
<div class="a " style="left:1348px;top:508px;width:1px;height:72px;background:rgba(240,240,240,.92)"></div>
<div class="a " style="left:1413px;top:490px;width:1px;height:17px;background:#a6a6a6"></div>
<div class="a " style="left:1414px;top:490px;width:1px;height:17px;background:rgba(255,255,255,.85)"></div>
<div class="a " style="left:1413px;top:508px;width:1px;height:72px;background:rgba(240,240,240,.92)"></div>
<div class="a" style="left:459px;top:490px;width:177px;height:16px;overflow:hidden"><div class="t msb" style="left:0;top:3.43px;color:#000;transform:scaleX(1.021);">Text</div></div>
<div class="a" style="left:639px;top:490px;width:24px;height:16px;overflow:hidden"><div class="t msb" style="left:0;top:3.43px;color:#000;transform:scaleX(0.91);">MJ</div></div>
<div class="a" style="left:666px;top:490px;width:62px;height:16px;overflow:hidden"><div class="t msb" style="left:0;top:3.43px;color:#000;transform:scaleX(0.969);">Počet MJ</div></div>
<div class="a" style="left:731px;top:490px;width:80px;height:16px;overflow:hidden"><div class="t msb" style="left:0;top:3.43px;color:#000;transform:scaleX(0.959);">Cena MJ</div></div>
<div class="a" style="left:814px;top:490px;width:48px;height:16px;overflow:hidden"><div class="t msb" style="left:0;top:3.43px;color:#000;transform:scaleX(0.964);">Sazba D</div></div>
<div class="a" style="left:865px;top:490px;width:40px;height:16px;overflow:hidden"><div class="t msb" style="left:0;top:3.43px;color:#000;transform:scaleX(1.016);">Sleva %</div></div>
<div class="a" style="left:908px;top:490px;width:50px;height:16px;overflow:hidden"><div class="t msb" style="left:0;top:3.43px;color:#000;transform:scaleX(1.009);">Sleva M.J.</div></div>
<div class="a" style="left:961px;top:490px;width:62px;height:16px;overflow:hidden"><div class="t msb" style="left:0;top:3.43px;color:#000;transform:scaleX(0.942);">Celkem</div></div>
<div class="a" style="left:1026px;top:490px;width:62px;height:16px;overflow:hidden"><div class="t msb" style="left:0;top:3.43px;color:#000;transform:scaleX(0.974);">Celkem bez</div></div>
<div class="a" style="left:1091px;top:490px;width:62px;height:16px;overflow:hidden"><div class="t msb" style="left:0;top:3.43px;color:#000;transform:scaleX(0.979);">Typ pol.</div></div>
<div class="a" style="left:1156px;top:490px;width:62px;height:16px;overflow:hidden"><div class="t msb" style="left:0;top:3.43px;color:#000;transform:scaleX(0.964);">Středisko</div></div>
<div class="a" style="left:1221px;top:490px;width:62px;height:16px;overflow:hidden"><div class="t msb" style="left:0;top:3.43px;color:#000;transform:scaleX(1.026);">Zakázka</div></div>
<div class="a" style="left:1286px;top:490px;width:62px;height:16px;overflow:hidden"><div class="t msb" style="left:0;top:3.43px;color:#000;transform:scaleX(0.916);">Hmotnost</div></div>
<div class="a" style="left:1351px;top:490px;width:62px;height:16px;overflow:hidden"><div class="t msb" style="left:0;top:3.43px;color:#000;transform:scaleX(0.986);">Skl.karta</div></div>
<div class="a" style="left:1416px;top:490px;width:38px;height:16px;overflow:hidden"><div class="t msb" style="left:0;top:3.43px;color:#000;transform:scaleX(0.941);">Datum</div></div>
<div class="t ms" style="left:459px;top:511.43px;color:#000;transform:scaleX(0.841);">Pronájem reklamní plochy</div>
<div class="t ms" style="left:1091px;top:511.43px;color:#000;">Z</div>
<div class="t ms" style="left:1156px;top:511.43px;color:#000;">03</div>
<div class="t ms" style="left:1221px;top:511.43px;color:#000;">0</div>
<div class="t ms" style="left:639px;top:511.43px;color:#000;">měs</div>
<div class="t msr" style="right:1194px;top:511.43px;color:#000">3,000</div>
<div class="t msr" style="right:1111px;top:511.43px;color:#000">10 000,00</div>
<div class="t msr" style="right:1060px;top:511.43px;color:#000">21%</div>
<div class="t msr" style="right:899px;top:511.43px;color:#000">36 300,00</div>
<div class="t msr" style="right:834px;top:511.43px;color:#000">30 000,00</div>
<svg class="a" style="left:448px;top:511px" width="7" height="11" viewBox="0 0 7 11"><path d="M0.5 0L6.5 5.5L0.5 11Z" fill="#000"/></svg>
<div class="t ms" style="left:459px;top:529.42px;color:#000;transform:scaleX(0.911);">1/2019 - 3/2019</div>
<div class="t ms" style="left:1091px;top:529.42px;color:#000;">Z</div>
<div class="t ms" style="left:1156px;top:529.42px;color:#000;">03</div>
<div class="t ms" style="left:1221px;top:529.42px;color:#000;">0</div>
<div class="t ms" style="left:459px;top:547.42px;color:#000;">.</div>
<div class="t ms" style="left:1091px;top:547.42px;color:#000;">Z</div>
<div class="t ms" style="left:1156px;top:547.42px;color:#000;">03</div>
<div class="t ms" style="left:1221px;top:547.42px;color:#000;">0</div>
<div class="t ms" style="left:459px;top:565.42px;color:#000;transform:scaleX(0.816);">------ Předfaktura -----</div>
<div class="t ms" style="left:1091px;top:565.42px;color:#000;">Z</div>
<div class="t ms" style="left:1156px;top:565.42px;color:#000;">03</div>
<div class="t ms" style="left:1221px;top:565.42px;color:#000;">0</div>
<div class="a " style="left:1454px;top:490px;width:17px;height:388px;background:#f0f0f0"></div>
<div class="a " style="left:1454px;top:508px;width:15px;height:200px;background:#cdcdcd"></div>
<svg class="a" style="left:1457px;top:495px" width="9" height="6" viewBox="0 0 9 6"><path d="M1.2 4.9L4.5 1.6L7.8 4.9" fill="none" stroke="#555" stroke-width="2"/></svg>
<svg class="a" style="left:1457px;top:866px" width="9" height="6" viewBox="0 0 9 6"><path d="M1.2 1.1L4.5 4.4L7.8 1.1" fill="none" stroke="#555" stroke-width="2"/></svg>
<div class="a " style="left:445px;top:878px;width:1009px;height:16px;background:#f0f0f0"></div>
<div class="a " style="left:462px;top:878px;width:17px;height:15px;background:#cdcdcd"></div>
<svg class="a" style="left:450px;top:881px" width="6" height="9" viewBox="0 0 6 9"><path d="M4.9 1.2L1.6 4.5L4.9 7.8" fill="none" stroke="#555" stroke-width="2"/></svg>
<svg class="a" style="left:1442px;top:881px" width="6" height="9" viewBox="0 0 6 9"><path d="M1.1 1.2L4.4 4.5L1.1 7.8" fill="none" stroke="#555" stroke-width="2"/></svg>
<div class="a " style="left:1454px;top:878px;width:17px;height:16px;background:#f0f0f0"></div>
<div class="b" style="left:1490px;top:204px;width:73px;height:23px"></div>
<div class="t msc" style="left:1450px;width:153px;top:210.43px;color:#000;transform:scaleX(0.955)">Zavřít</div>
<div class="a " style="left:1489px;top:267px;width:71px;height:67px;box-sizing:border-box;border-top:1px solid #fff;border-left:1px solid #fff;border-right:1px solid #a0a0a0;border-bottom:1px solid #a0a0a0;background:#f0f0f0"></div>
<div class="b" style="left:1490px;top:268px;width:21px;height:20px"></div>
<svg class="a" style="left:1492px;top:270px" width="17" height="16" viewBox="0 0 17 16"><path d="M4 2.5H9.5L13 6V14.5H4Z" fill="#fff" stroke="#000" stroke-width="1.2"/><path d="M9.3 2.5V6.2H13" fill="none" stroke="#000" stroke-width="1"/><path d="M5.5 6H8M5.5 8.5H11.5M5.5 10.5H11.5M5.5 12.5H11.5" stroke="#000" stroke-width="1"/></svg>
<div class="b" style="left:1514px;top:268px;width:21px;height:20px"></div>
<svg class="a" style="left:1516px;top:270px" width="17" height="16" viewBox="0 0 17 16"><rect x="2" y="2" width="5.5" height="12" fill="#000"/><path d="M7.5 9.5H12V14H7.5Z" fill="#000"/><path d="M6.5 12.5L7.3 9.6L13.6 3.2L15.4 5L9.2 11.4Z" fill="#000" stroke="#f0f0f0" stroke-width=".7"/><path d="M8 5.5L9.8 3.8" stroke="#000" stroke-width="1.2"/></svg>
<div class="b" style="left:1538px;top:268px;width:21px;height:20px"></div>
<svg class="a" style="left:1540px;top:270px" width="17" height="16" viewBox="0 0 17 16"><path d="M7 3.5V1.5H11L14 4.5V11.5H11.5" fill="none" stroke="#000" stroke-width="1.1"/><path d="M3 4.5H8L10.5 7V14.5H3Z" fill="#fff" stroke="#000" stroke-width="1.2"/><path d="M4.8 7.5H6M4.8 9.5H8.8M4.8 11.2H8.8M4.8 12.9H8.8" stroke="#000" stroke-width=".9"/></svg>
<div class="b" style="left:1490px;top:290px;width:21px;height:20px"></div>
<svg class="a" style="left:1492px;top:292px" width="17" height="16" viewBox="0 0 17 16"><circle cx="11.3" cy="5.4" r="4" fill="#f4f4f4" stroke="#000" stroke-width="1.3"/><path d="M8.4 8.4L6.5 10.3" stroke="#000" stroke-width="1.3"/><path d="M6.6 10.2L3.6 13.2" stroke="#000" stroke-width="3.2" stroke-linecap="round"/></svg>
<div class="b" style="left:1514px;top:290px;width:21px;height:20px"></div>
<svg class="a" style="left:1516px;top:292px" width="17" height="16" viewBox="0 0 17 16"><g transform="translate(8.5,8)"><g fill="#000"><rect x="-1.7" y="-7" width="3.4" height="4" transform="rotate(0)"/><rect x="-1.7" y="-7" width="3.4" height="4" transform="rotate(45)"/><rect x="-1.7" y="-7" width="3.4" height="4" transform="rotate(90)"/><rect x="-1.7" y="-7" width="3.4" height="4" transform="rotate(135)"/><rect x="-1.7" y="-7" width="3.4" height="4" transform="rotate(180)"/><rect x="-1.7" y="-7" width="3.4" height="4" transform="rotate(225)"/><rect x="-1.7" y="-7" width="3.4" height="4" transform="rotate(270)"/><rect x="-1.7" y="-7" width="3.4" height="4" transform="rotate(315)"/></g><circle r="5" fill="#000"/><circle r="2.5" fill="#efefef"/></g></svg>
<div class="b" style="left:1490px;top:312px;width:21px;height:20px"></div>
<svg class="a" style="left:1492px;top:314px" width="17" height="16" viewBox="0 0 17 16"><path d="M2.5 2.5H14.5L9.6 8.2V13L7.4 15V8.2Z" fill="#000"/></svg>
<div class="b" style="left:1514px;top:312px;width:21px;height:20px"></div>
<svg class="a" style="left:1516px;top:314px" width="17" height="16" viewBox="0 0 17 16"><path d="M1.5 1.5H13.5L8.6 7.2V11L6.4 13V7.2Z" fill="#000"/><path d="M10.5 10.5L15 15M15 10.5L10.5 15" stroke="#000" stroke-width="1.5"/></svg>
<div class="b" style="left:1538px;top:312px;width:21px;height:20px"></div>
<svg class="a" style="left:1540px;top:314px" width="17" height="16" viewBox="0 0 17 16"><path d="M1.2 8C4 2 13 2 15.8 8C13 14 4 14 1.2 8Z" fill="#000"/><circle cx="8.5" cy="8" r="3.2" fill="#f0f0f0"/><circle cx="8.5" cy="8" r="1.7" fill="#000"/></svg>
<div class="b" style="left:1490px;top:343px;width:73px;height:23px"></div>
<div class="t msc" style="left:1450px;width:153px;top:349.43px;color:#000;transform:scaleX(0.875)"><u>H</u>ledání</div>
<div class="b" style="left:1490px;top:367px;width:73px;height:23px"></div>
<div class="t msc" style="left:1450px;width:153px;top:373.43px;color:#000;transform:scaleX(0.912)"><u>F</u>unkce</div>
<div class="b" style="left:1490px;top:391px;width:73px;height:23px"></div>
<div class="t msc" style="left:1450px;width:153px;top:397.43px;color:#000;transform:scaleX(0.864)"><u>V</u>ýstupy</div>
<div class="b" style="left:1490px;top:415px;width:73px;height:23px"></div>
<div class="t msc" style="left:1450px;width:153px;top:421.43px;color:#000;transform:scaleX(0.864)">E<u>x</u>port/Import</div>
<div class="b" style="left:1490px;top:445px;width:73px;height:23px"></div>
<div class="t msc" style="left:1450px;width:153px;top:451.43px;color:#000;transform:scaleX(0.845)">Sez<u>n</u>am úhrad</div>
<div class="a " style="left:1484px;top:476px;width:85px;height:133px;box-sizing:border-box;border:1px solid #dcdcdc;box-shadow:inset 1px 1px 0 #fafafa, 1px 1px 0 #fafafa"></div>
<div class="a" style="left:1491px;top:470px;width:38px;height:13px;background:#f0f0f0"></div>
<div class="t ms" style="left:1493px;top:471.43px;color:#000;transform:scaleX(0.859);">Uhradit</div>
<div class="b" style="left:1490px;top:484px;width:73px;height:23px"></div>
<div class="t msc" style="left:1450px;width:153px;top:490.43px;color:#000;transform:scaleX(0.906)"><u>B</u>anka</div>
<div class="b" style="left:1490px;top:508px;width:73px;height:23px"></div>
<div class="t msc" style="left:1450px;width:153px;top:514.42px;color:#000;transform:scaleX(0.871)">Pokla<u>d</u>na</div>
<div class="b" style="left:1490px;top:532px;width:73px;height:23px"></div>
<div class="t msc" style="left:1450px;width:153px;top:538.42px;color:#000;transform:scaleX(0.851)">Kur<u>z</u>ový rozdíl</div>
<div class="b" style="left:1490px;top:556px;width:73px;height:23px"></div>
<div class="t msc" style="left:1450px;width:153px;top:562.42px;color:#000;transform:scaleX(0.925)">Zápoč<u>e</u>t</div>
<div class="b" style="left:1490px;top:580px;width:73px;height:23px"></div>
<div class="t msc" style="left:1450px;width:153px;top:586.42px;color:#000;transform:scaleX(0.875)"><u>I</u>nterní doklad</div>
<div class="a " style="left:1484px;top:621px;width:85px;height:64px;box-sizing:border-box;border:1px solid #dcdcdc;box-shadow:inset 1px 1px 0 #fafafa, 1px 1px 0 #fafafa"></div>
<div class="a" style="left:1491px;top:615px;width:23px;height:13px;background:#f0f0f0"></div>
<div class="t ms" style="left:1493px;top:616.42px;color:#000;transform:scaleX(0.886);">Tisk</div>
<div class="b" style="left:1489px;top:632px;width:73px;height:23px"></div>
<svg class="a" style="left:1497px;top:636px" width="17" height="16" viewBox="0 0 17 16"><rect x="4" y="1" width="10" height="2" rx=".4" fill="#000"/><path d="M2 4.2h14v5.8h-2.2v-3.2h-9.6v3.2H2z" fill="#000"/><circle cx="14.4" cy="5.6" r=".65" fill="#f4f4f4"/><path d="M5.5 8.3V11.6L8.4 14.5H12.9V8.3" fill="#ececec" stroke="#000" stroke-width="1.1" stroke-linejoin="round"/><path d="M5.5 11.6H8.4V14.5" fill="none" stroke="#000" stroke-width=".9"/></svg>
<div class="t ms" style="left:1518px;top:638.42px;color:#000;transform:scaleX(0.854);">Faktura</div>
<div class="b" style="left:1489px;top:656px;width:73px;height:23px"></div>
<svg class="a" style="left:1497px;top:660px" width="17" height="16" viewBox="0 0 17 16"><rect x="4" y="1" width="10" height="2" rx=".4" fill="#000"/><path d="M2 4.2h14v5.8h-2.2v-3.2h-9.6v3.2H2z" fill="#000"/><circle cx="14.4" cy="5.6" r=".65" fill="#f4f4f4"/><path d="M5.5 8.3V11.6L8.4 14.5H12.9V8.3" fill="#ececec" stroke="#000" stroke-width="1.1" stroke-linejoin="round"/><path d="M5.5 11.6H8.4V14.5" fill="none" stroke="#000" stroke-width=".9"/></svg>
<div class="t ms" style="left:1518px;top:662.42px;color:#000;transform:scaleX(0.859);">Pokl. d.</div>
<div class="b" style="left:1489px;top:709px;width:73px;height:23px"></div>
<div class="t" style="left:1508px;top:712px;font-size:12px;font-style:italic;color:#2f8eea;letter-spacing:-0.2px;-webkit-text-stroke:.25px #2f8eea">Turbo</div>
<div class="t" style="left:1521.5px;top:723px;font-size:7px;font-style:italic;color:#555">faktura</div>
<div class="b" style="left:1489px;top:733px;width:73px;height:23px"></div>
<div class="t" style="left:1515px;top:739.4px;font-size:12.5px;letter-spacing:1.2px;color:#111;transform:scaleX(.74);transform-origin:0 0">EET</div>
<div class="b" style="left:448px;top:914px;width:22px;height:23px"></div>
<svg class="a" style="left:451px;top:918px" width="16" height="15" viewBox="0 0 16 15"><rect x="3.5" y="3.5" width="1.8" height="8" fill="#000"/><path d="M12.5 3.5V11.5L5.5 7.5Z" fill="#000"/></svg>
<div class="b" style="left:472px;top:914px;width:22px;height:23px"></div>
<svg class="a" style="left:475px;top:918px" width="16" height="15" viewBox="0 0 16 15"><path d="M11 3.5V11.5L4 7.5Z" fill="#000"/></svg>
<div class="b" style="left:496px;top:914px;width:22px;height:23px;border-color:#d6d6d6;background:#efefef"></div>
<svg class="a" style="left:499px;top:918px" width="16" height="15" viewBox="0 0 16 15"><path d="M5.5 3.5V11.5L12 7.5Z" fill="#fff" stroke="#c4c4c4" stroke-width="1"/></svg>
<div class="b" style="left:520px;top:914px;width:22px;height:23px;border-color:#d6d6d6;background:#efefef"></div>
<svg class="a" style="left:523px;top:918px" width="16" height="15" viewBox="0 0 16 15"><path d="M4 3.5V11.5L10.5 7.5Z" fill="#fff" stroke="#c4c4c4" stroke-width="1"/><rect x="11" y="3.5" width="1.5" height="8" fill="#fff" stroke="#c4c4c4" stroke-width=".8"/></svg>
<div class="b" style="left:544px;top:914px;width:22px;height:23px"></div>
<svg class="a" style="left:547px;top:918px" width="16" height="15" viewBox="0 0 16 15"><path d="M7 3h2.4v3.3h3.3v2.4h-3.3v3.3H7v-3.3H3.7V6.3H7z" fill="#000"/></svg>
<div class="b" style="left:568px;top:914px;width:22px;height:23px"></div>
<svg class="a" style="left:571px;top:918px" width="16" height="15" viewBox="0 0 16 15"><rect x="3.5" y="6.3" width="9.5" height="2.4" fill="#000"/></svg>
<div class="b" style="left:592px;top:914px;width:22px;height:23px"></div>
<svg class="a" style="left:595px;top:918px" width="16" height="15" viewBox="0 0 16 15"><path d="M8 4.5L12.8 10H3.2Z" fill="#000"/></svg>
<div class="b" style="left:616px;top:914px;width:22px;height:23px"></div>
<svg class="a" style="left:619px;top:918px" width="16" height="15" viewBox="0 0 16 15"><path d="M12 8a4 4 0 1 1-4-4" fill="none" stroke="#000" stroke-width="2"/><path d="M7 1l5 3-5 3z" fill="#000"/></svg>
<div class="b" style="left:646px;top:914px;width:25px;height:23px"></div>
<div class="t" style="left:646px;width:25px;text-align:center;top:914px;font-size:23px;font-family:'Liberation Serif',serif">Σ</div>
<div class="a " style="left:678px;top:898px;width:13px;height:13px;box-sizing:border-box;border:1px solid #707070;background:#fff"></div>
<div class="t ms" style="left:694px;top:899.42px;color:#000;transform:scaleX(0.85);">Přidávat s pr<u>o</u>filem</div>
<div class="b" style="left:678px;top:914px;width:78px;height:23px"></div>
<div class="t msc" style="left:638px;width:158px;top:920.42px;color:#000;transform:scaleX(0.862)">Přidat p<u>r</u>edf.</div>
<div class="b" style="left:761px;top:914px;width:78px;height:23px"></div>
<div class="t msc" style="left:721px;width:158px;top:920.42px;color:#000;transform:scaleX(0.881)">Přidat f<u>a</u>kturu</div>
<div class="a " style="left:848px;top:907px;width:335px;height:35px;box-sizing:border-box;border:1px solid #dcdcdc;box-shadow:inset 1px 1px 0 #fafafa, 1px 1px 0 #fafafa"></div>
<div class="a " style="left:853px;top:901px;width:138px;height:13px;background:#f0f0f0"></div>
<div class="t " style="left:855px;top:902px;font-size:11.2px;color:#000">Zrychlená volba (Ctrl+1..4)</div>
<div class="a " style="left:852px;top:914px;width:73px;height:23px;box-sizing:border-box;border:1px solid #e2e2e2;background:#f0f0f0"></div>
<div class="b" style="left:1156px;top:916px;width:23px;height:19px"></div>
<div class="t " style="left:1161px;top:920px;font-size:12px;letter-spacing:.5px">...</div>
<div class="t ms" style="left:445px;top:948.42px;color:#000;transform:scaleX(0.842);">Faktury:</div>
<div class="a " style="left:484px;top:945px;width:68px;height:18px;box-sizing:border-box;background:#800080;border-top:1px solid #a0a0a0;border-left:1px solid rgba(160,160,160,.45);border-right:1px solid #fff;border-bottom:1px solid #fff"></div>
<div class="t msc" style="left:444px;width:148px;top:948.42px;color:#fff;transform:scaleX(0.87)">Označené</div>
<div class="a " style="left:552px;top:945px;width:72px;height:18px;box-sizing:border-box;background:#fff;border-top:1px solid #a0a0a0;border-left:1px solid rgba(160,160,160,.45);border-right:1px solid #fff;border-bottom:1px solid #fff"></div>
<div class="t msc" style="left:512px;width:152px;top:948.42px;color:#000;transform:scaleX(0.87)">Zaplacené</div>
<div class="a " style="left:625px;top:945px;width:79px;height:18px;box-sizing:border-box;background:#d3e4e4;border-top:1px solid #a0a0a0;border-left:1px solid rgba(160,160,160,.45);border-right:1px solid #fff;border-bottom:1px solid #fff"></div>
<div class="t msc" style="left:585px;width:159px;top:948.42px;color:#000;transform:scaleX(0.87)">Před splatností</div>
<div class="a " style="left:705px;top:945px;width:74px;height:18px;box-sizing:border-box;background:#e3d3c5;border-top:1px solid #a0a0a0;border-left:1px solid rgba(160,160,160,.45);border-right:1px solid #fff;border-bottom:1px solid #fff"></div>
<div class="t msc" style="left:665px;width:154px;top:948.42px;color:#000;transform:scaleX(0.858)">Po splatnosti</div>
<div class="a " style="left:780px;top:945px;width:71px;height:18px;box-sizing:border-box;background:#ff0000;border-top:1px solid #a0a0a0;border-left:1px solid rgba(160,160,160,.45);border-right:1px solid #fff;border-bottom:1px solid #fff"></div>
<div class="t msc" style="left:740px;width:151px;top:948.42px;color:#800000;transform:scaleX(0.87)">Storna</div>
<div class="t ms" style="left:855px;top:948.42px;color:#000;transform:scaleX(0.84);">Položky:</div>
<div class="a " style="left:900px;top:945px;width:68px;height:18px;box-sizing:border-box;background:#fff;border-top:1px solid #a0a0a0;border-left:1px solid rgba(160,160,160,.45);border-right:1px solid #fff;border-bottom:1px solid #fff"></div>
<div class="t msc" style="left:860px;width:148px;top:948.42px;color:#000;transform:scaleX(0.87)">Finanční</div>
<div class="a " style="left:969px;top:945px;width:67px;height:18px;box-sizing:border-box;background:#cfe1b4;border-top:1px solid #a0a0a0;border-left:1px solid rgba(160,160,160,.45);border-right:1px solid #fff;border-bottom:1px solid #fff"></div>
<div class="t msc" style="left:929px;width:147px;top:948.42px;color:#000;transform:scaleX(0.87)">Text</div>
<div class="a " style="left:1037px;top:945px;width:67px;height:18px;box-sizing:border-box;background:#d3e4e4;border-top:1px solid #a0a0a0;border-left:1px solid rgba(160,160,160,.45);border-right:1px solid #fff;border-bottom:1px solid #fff"></div>
<div class="t msc" style="left:997px;width:147px;top:948.42px;color:#000;transform:scaleX(0.87)">Sklad</div>
<div class="a " style="left:1105px;top:945px;width:69px;height:18px;box-sizing:border-box;background:#a6caf0;border-top:1px solid #a0a0a0;border-left:1px solid rgba(160,160,160,.45);border-right:1px solid #fff;border-bottom:1px solid #fff"></div>
<div class="t msc" style="left:1065px;width:149px;top:948.42px;color:#000;transform:scaleX(0.87)">Objednávka</div>
<div class="a " style="left:439px;top:967px;width:1134px;height:1px;background:#cacaca"></div>
<div class="a " style="left:1572px;top:969px;width:1px;height:17px;background:#dcdcdc"></div>
<div class="t " style="left:440px;top:972px;font-size:12.055px;color:#000">[Ctrl+Enter]Opravit [Ins]Přidat [Ctrl+Ins]Přidat předf.  [Ctrl+Del]Smazat [Ctrl+N]Nezaúč.doklady  [Ctrl+Shift+F]Nabídka filtrů [Ctrl+Shift+0..9]Filtr   [Mezerník]Označit</div>
<div class="a " style="left:439px;top:986px;width:1134px;height:22px;background:#dae6f3;border-top:1px solid #fff;border-right:1px solid #a0a3ad;border-bottom:1px solid #a0a3ad;box-sizing:border-box"></div>
<div class="t" style="left:447px;top:992px;font-size:12.5px;font-weight:bold;transform:scaleX(.94);transform-origin:0 0">1 - Firma 1</div>
<div class="a " style="left:0px;top:1078px;width:1920px;height:2px;background:#c2ae88;border-top:1px solid #b09e78;box-sizing:border-box"></div>
<div class="a " style="left:113px;top:1079px;width:60px;height:1px;background:#f0f0f0;outline:1px solid #7a7460"></div>
<div class="a " style="left:175px;top:1079px;width:60px;height:1px;background:#f0f0f0;outline:1px solid #7a7460"></div>
<div class="a " style="left:237px;top:1079px;width:60px;height:1px;background:#f0f0f0;outline:1px solid #7a7460"></div>
<div class="a " style="left:299px;top:1079px;width:60px;height:1px;background:#f0f0f0;outline:1px solid #7a7460"></div>
<div class="a " style="left:361px;top:1079px;width:60px;height:1px;background:#f0f0f0;outline:1px solid #7a7460"></div>
<div class="a " style="left:423px;top:1079px;width:60px;height:1px;background:#f0f0f0;outline:1px solid #7a7460"></div>
</body></html>
